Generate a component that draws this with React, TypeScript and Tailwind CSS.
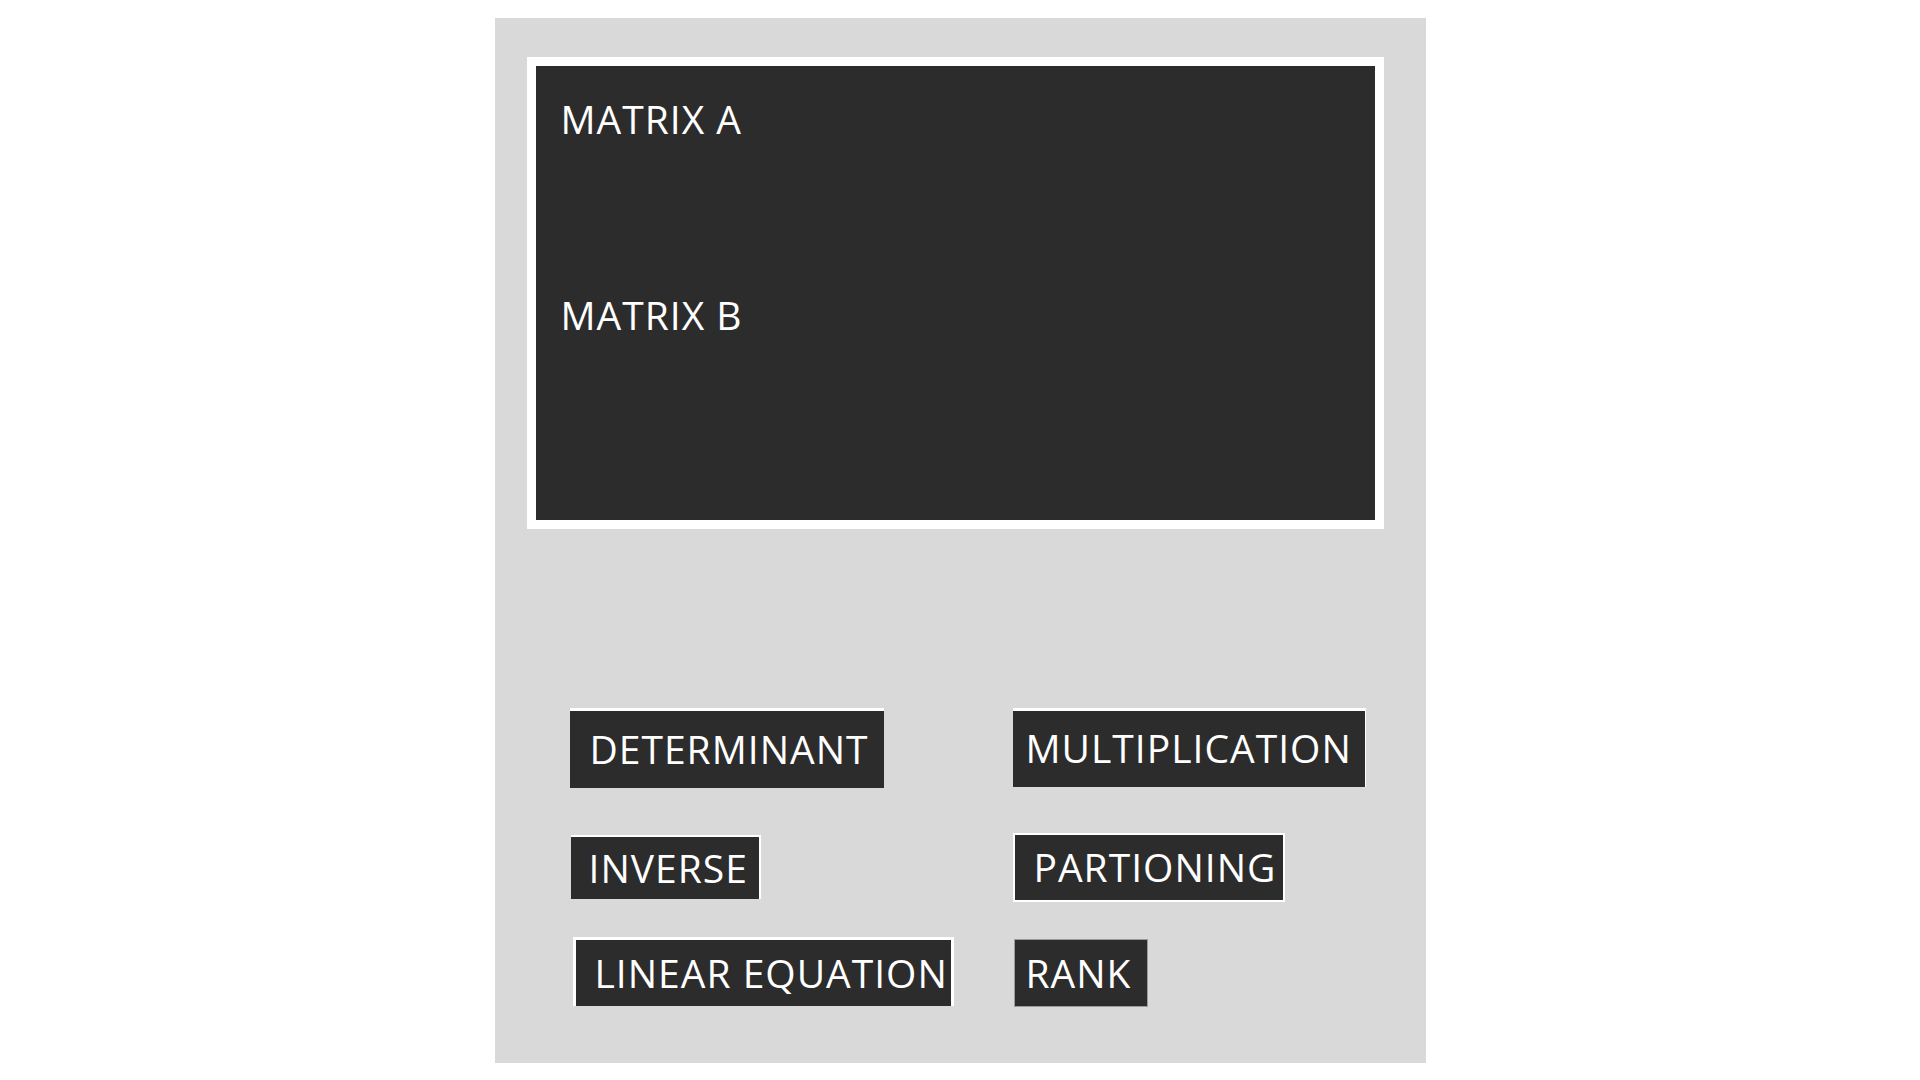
export default function App() {
  const font = { fontFamily: '"Open Sans", "Noto Sans", sans-serif' }

  return (
    <div className="min-h-screen bg-white pt-[18px]" style={font}>
      <div className="mx-auto w-[931px] h-[1045px] bg-[#d9d9d9] pt-[39px] pl-[32px]">
        <div className="w-[857px] h-[472px] border-[9px] border-white bg-[#2c2c2c] pt-[33px] pl-[25px] text-white text-[39px] font-[380] tracking-[1px] leading-none">
          <p>MATRIX A</p>
          <p className="mt-[157px]">MATRIX B</p>
        </div>

        <div className="pl-[43px] mt-[179px] text-white text-[39px] font-[380] tracking-[1px] leading-none whitespace-nowrap">
          <div className="flex items-start">
            <div className="w-[443px]">
              <button className="w-[314px] h-[80px] bg-[#2c2c2c] border-t-[3px] border-white pl-[20px] pb-[3px] flex items-center">
                DETERMINANT
              </button>
            </div>
            <button className="w-[353px] h-[79px] bg-[#2c2c2c] border-t-[3px] border-r border-white pl-[13px] pb-[3px] flex items-center">
              MULTIPLICATION
            </button>
          </div>

          <div className="flex items-start mt-[45px]">
            <div className="w-[443px] pt-[2px] pl-[1px]">
              <button className="w-[190px] h-[64px] bg-[#2c2c2c] border-t-2 border-r-2 border-white pl-[18px] pb-[2px] flex items-center">
                INVERSE
              </button>
            </div>
            <button className="w-[272px] h-[69px] bg-[#2c2c2c] border-[2px] border-white pl-[19px] pb-[2px] flex items-center">
              PARTIONING
            </button>
          </div>

          <div className="flex items-start mt-[35px]">
            <div className="w-[443px] pl-[3px]">
              <button className="w-[381px] h-[69px] bg-[#2c2c2c] border-[3px] border-b-0 border-white pl-[19px] pb-[2px] flex items-center">
                LINEAR EQUATION
              </button>
            </div>
            <button className="w-[134px] h-[68px] mt-[2px] ml-[1px] bg-[#2c2c2c] border border-[#9a9a9a] pl-[11px] pb-[2px] flex items-center">
              RANK
            </button>
          </div>
        </div>
      </div>
    </div>
  )
}
